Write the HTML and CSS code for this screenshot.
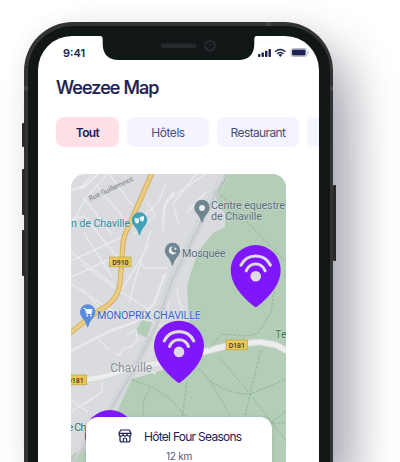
FILE: index.html
```html
<!DOCTYPE html>
<html lang="fr">
<head>
<meta charset="utf-8">
<title>Weezee Map</title>
<link rel="stylesheet" href="styles.css">
</head>
<body>
<div class="phone">
  <i class="key mute"></i><i class="key up"></i><i class="key down"></i><i class="key power"></i>
  <i class="band band-left"></i><i class="band band-right"></i><i class="band band-top"></i>
  <div class="bezel">
    <main class="screen">
      <svg class="notch" width="156" height="24" viewBox="0 0 156 24"><path fill="#111617" d="M0 0H155Q153.300 .5 153.300 3V8Q153 24 137 24H18Q2 24 1.700 8V3Q1.700 .5 0 0Z"/><rect x="59.700" y="7.500" width="36" height="4.500" rx="2.200" fill="#25292c"/><circle cx="109" cy="9.700" r="5" fill="#15191b" stroke="#2c3033" stroke-width="1.600"/><circle cx="109" cy="8.500" r="1" fill="#30353a"/></svg>
      <header class="status">
        <span class="time">9:41</span>
        <svg width="52" height="12" viewBox="0 0 52 12"><g fill="#1b2150"><rect x="0" y="7" width="2.400" height="3" rx=".7"/><rect x="3.500" y="5.500" width="2.400" height="4.500" rx=".7"/><rect x="7" y="3.700" width="2.400" height="6.300" rx=".7"/><rect x="10.500" y="2" width="2.400" height="8" rx=".7"/><path d="M20.300 7.800Q22.300 6.300 24.300 7.800L22.300 10Z"/></g><path d="M17.200 4.700Q22.300.3 27.400 4.700M19 6.800Q22.300 4 25.600 6.800" fill="none" stroke="#1b2150" stroke-width="1.400"/><rect x="32.900" y="1.500" width="16.200" height="8" rx="2.300" fill="none" stroke="#b9bbcd"/><rect x="34" y="2.600" width="13.600" height="5.800" rx="1.200" fill="#1b2150"/><path d="M50 4Q52 5.500 50 7Z" fill="#b9bbcd"/></svg>
      </header>
      <h1>Weezee Map</h1>
      <nav class="chips">
        <span class="chip active">Tout</span>
        <span class="chip hotels">Hôtels</span>
        <span class="chip food">Restaurant</span>
        <span class="chip more"></span>
      </nav>
      <section class="map">
        <svg class="canvas" viewBox="71 174 215 288" width="215" height="288">
          <defs>
            <g id="wifi-pin">
              <path fill="#8017fb" d="M-25 0A25 25 0 0 1 25 0C25 13 16 25 1.500 36.500Q0 37.500-1.500 36.500C-16 25-25 13-25 0Z"/>
              <g class="symbol"><circle cy="6.200" r="5.300"/><path d="M-14.700-4.800A16.300 16.300 0 0 1 14.700-4.800M-9.400.8A9.900 9.900 0 0 1 9.400.8"/></g>
            </g>
            <path id="poi" d="M-7.700 0A7.700 7.700 0 0 1 7.700 0C7.700 5.500 2.500 7 .7 14.500Q0 16-.7 14.500C-2.500 7-7.700 5.500-7.700 0Z"/>
          </defs>
          <rect x="71" y="174" width="215" height="301" fill="#d9dbde"/>
          <g fill="#b3cdb7">
            <path d="M229 174L213 193L225 214V227L213 233L198 252L190 275L187 286L189 322L195 358L286 352V174Z"/>
            <path d="M132 379L160 371L204 357L230 348L260 344L286 353V475H90L117 411Z"/>
            <path d="M135 332L142 320L153 319L147 338ZM71 455L87 448V475H71Z"/>
          </g>
          <g class="street">
            <path d="M71 226L86 198L107 174M71 190L82 186L93 174M71 220L84 216L123 264M83 197L112 235M96 185L126 221M109 174L132 205M71 261L124 236M71 277L121 254M84 233L112 277M71 252L114 285M71 284L119 315L151 321L162 326M83 265L120 292L163 318M97 337L109 350M107 316L80 287M133 235L155 216L147 201M151 230L136 277L129 303M166 184L158 203L139 220M196 174L173 204L179 225M171 198L205 174M187 212L206 192M139 262L145 268L168 268M120 292L131 275L150 243M126 336L136 330L138 340L132 346L124 348L120 355L115 354M102 377V392L81 405M71 400L88 412M72 411L94 398M139 372L148 370L156 374M177 288L179 302L187 319M163 222V231M168 302V310"/>
            <path class="wide" d="M71 351L110 331L135 322L154 304L165 274M71 190L84 187L98 174M163 222L165 205L174 192"/>
          </g>
          <g class="rail"><path class="bed" d="M226 174L205 214L173 278L155 328L132 373L107 415L71 464"/><path class="track" d="M221 174L202 211L171 274L151 329L128 374L102 416L71 457M230 174L208 214L180 270L159 323L136 372L110 416L71 470"/></g>
          <path class="major-edge" d="M71 382L103 377L127 369L160 363L203 352L230 345L260 342L276 345L287 351"/><path class="major" d="M71 382L103 377L127 369L160 363L203 352L230 345L260 342L276 345L287 351"/>
          <path class="gold-edge" d="M152 173L138 205L128 228Q123 237 123 244L120 283Q119 296 108 305L97 312L84 322L70 333"/>
          <path class="gold" d="M152 173L138 205L128 228Q123 237 123 244L120 283Q119 296 108 305L97 312L84 322L70 333"/>
          <path class="trail" d="M227 175L218 192L284 260M275 287L271 312L258 333Q250 337 237 335L221 334L208 350M219 356L234 375L250 394L240 440M261 350L250 394L286 379M196 365L210 381Q229 394 250 394L286 441M132 380L152 387L170 399L194 425M150 388L143 402V430M210 381L231 417M187 382L182 420M286 411L269 424M270 423H286"/>
          <g class="shield"><rect x="109.500" y="257" width="21.500" height="9.800"/><rect x="226" y="340" width="21.500" height="9.800"/><rect x="65.500" y="375" width="21.200" height="9.800"/></g>
          <g class="road-no"><text x="112.300" y="264.600" textLength="16.200">D910</text><text x="228.700" y="347.600" textLength="16.200">D181</text><text x="67.300" y="382.500" textLength="16.500">D181</text></g>
          <text class="road-name" transform="translate(90 201) rotate(-25)" textLength="48">Rue Guilleminot</text>
          <use href="#wifi-pin" x="110" y="435"/>
          <g class="label">
            <text x="71" y="227" fill="#2e8fa3" textLength="59">n de Chaville</text>
            <text x="211" y="209" fill="#566d79" textLength="74">Centre équestre</text>
            <text x="211" y="219.500" fill="#566d79" textLength="51">de Chaville</text>
            <text x="182" y="257.300" fill="#566d79" textLength="43.500">Mosquée</text>
            <text x="97" y="319" fill="#3069cc" textLength="104">MONOPRIX CHAVILLE</text>
            <text x="275" y="338" fill="#327a4b">Te</text>
            <text x="67.500" y="430.500" fill="#327a4b" textLength="19">e Ch</text>
            <text class="town" x="110.200" y="372.200" fill="#8b8e94" textLength="42">Chaville</text>
          </g>
          <use href="#poi" x="139.500" y="220" fill="#43a3b6"/><g fill="#e9f4f6"><path d="M134.500 218L139 218.500V222Q137 225 135 222ZM139.500 217L144 216V220Q142 223 140 220Z"/></g>
          <use href="#poi" x="202" y="207.500" fill="#708591"/><circle cx="202" cy="208" r="2.900" fill="#eceff1"/>
          <use href="#poi" x="172.500" y="250.500" fill="#708591"/><path d="M173 246.500A4 4 0 1 0 176.500 252A3.200 3.200 0 0 1 173 246.500ZM174.500 247L177 249L174.500 250Z" fill="#eceff1"/>
          <use href="#poi" x="87.700" y="312" fill="#5b8ce0"/><path d="M83.500 308.500H85.300L86.700 313.500H91.200L92 309.500H86" fill="#f1f5ff" stroke="#f1f5ff"/><circle cx="87.300" cy="315.500" r=".9" fill="#fff"/><circle cx="91" cy="315.500" r=".9" fill="#fff"/>
          <use href="#wifi-pin" x="255.700" y="270"/><use href="#wifi-pin" x="179" y="345.700"/>
        </svg>
        <article class="card">
          <div class="place"><svg width="14" height="14" viewBox="0 0 14 14" fill="none" stroke="#1b2150" stroke-width="1.200" stroke-linejoin="round"><path d="M2.700 1H11.300L13 4.300V5A2 2 0 0 1 9 5.200A2 2 0 0 1 5 5.200A2 2 0 0 1 1 5V4.300ZM1 4.300H13M2 7V11Q2 13 4 13H10Q12 13 12 11V7M5.300 13V10.500Q5.300 9 7 9T8.700 10.500V13"/></svg><span>Hôtel Four Seasons</span></div>
          <p>12 km</p>
        </article>
      </section>
    </main>
  </div>
</div>
</body>
</html>
```
FILE: styles.css
```css
* { box-sizing: border-box; }
html { height: 462px; overflow: hidden; }
body { margin: 0; width: 400px; height: 462px; padding-top: 22px; overflow: hidden; background: #fff; font-family: Inter, sans-serif; color: #1b2150; }
.phone { position: relative; width: 309px; height: 440px; margin: 0 0 0 24px; padding: 3.5px 3.5px 0; border-radius: 49px 49px 0 0; background: #333; box-shadow: 22px 22px 44px rgba(35, 38, 62, .3), 22px 60px 44px -8px rgba(35, 38, 62, .12), 0 0 26px rgba(0, 0, 0, .04); }
.bezel { height: 436.5px; padding: 10.5px 10.5px 0; border-radius: 45px 45px 0 0; background: #111617; }
.screen { position: relative; height: 426px; border-radius: 34px 34px 0 0; background: #fff; overflow: hidden; }
.key { position: absolute; left: -2px; width: 3px; background: #292929; border-radius: 1px 0 0 1px; }
.mute { top: 101px; height: 24px; }
.up { top: 147px; height: 46px; }
.down { top: 208px; height: 46px; }
.power { left: auto; right: -2.5px; top: 163px; height: 76px; }
.band { position: absolute; width: 3.5px; height: 5px; background: #454545; }
.band-left { left: 0; top: 64px; }
.band-right { right: 0; top: 64px; }
.band-top { top: 0; left: 242px; width: 5px; height: 3.5px; }
.notch { position: absolute; left: 63px; top: 0; }
.status { display: flex; justify-content: space-between; align-items: center; height: 34px; padding: 0 9.5px 0 25px; }
.time { font-size: 11px; font-weight: 600; letter-spacing: 0; }
h1 { margin: 7px 0 0 18px; font-size: 18px; line-height: 22px; font-weight: 500; letter-spacing: -.9px; -webkit-text-stroke: .2px #1b2150; }
.chips { display: flex; gap: 8px; margin: 18px 0 0 18px; }
.chip { flex: none; height: 30px; border-radius: 8px; background: #f4f4ff; color: #4d4d73; font-size: 12px; line-height: 31px; text-align: center; letter-spacing: -.62px; }
.active { width: 63px; background: #ffe0e6; color: #1b2150; font-weight: 600; }
.hotels { width: 82px; letter-spacing: -.45px; }
.food { width: 82px; }
.more { width: 70px; }
.map { position: relative; width: 215px; height: 288px; margin: 27px 0 0 33px; border-radius: 14px 14px 0 0; overflow: hidden; }
.canvas { display: block; font-family: Roboto, sans-serif; }
.symbol { fill: #dddde1; }
.symbol path { fill: none; stroke: #dddde1; stroke-width: 3.1; stroke-linecap: round; }
.street { fill: none; stroke: #e8eaec; stroke-width: 1.4; stroke-linejoin: round; }
.wide { stroke-width: 2.4; }
.rail { fill: none; }
.bed { stroke: #c9ccd0; stroke-width: 3; }
.track { stroke: #cdd0d3; stroke-width: 1; }
.major-edge, .major, .gold-edge, .gold, .trail { fill: none; stroke-linejoin: round; }
.major-edge { stroke: #d4d7da; stroke-width: 7; }
.major { stroke: #eceded; stroke-width: 5; }
.gold-edge { stroke: #d5ad55; stroke-width: 5.2; }
.gold { stroke: #ebcb85; stroke-width: 3.4; }
.trail { stroke: #86b394; stroke-width: .9; stroke-dasharray: 2.5 1.5; }
.shield { fill: #e8c955; stroke: #c1a43e; stroke-width: .7; }
.road-no { font-size: 7px; font-weight: 500; fill: #393528; }
.road-name { font-size: 7px; fill: #777b80; }
.label { font-size: 10.8px; paint-order: stroke; stroke: rgba(235, 238, 240, .55); stroke-width: 1; }
.town { font-size: 12px; }
.card { position: absolute; left: 15px; top: 243px; width: 186px; height: 45px; padding-top: 10.5px; border-radius: 12px 12px 0 0; background: #fff; box-shadow: 0 1px 5px rgba(50, 70, 80, .15); text-align: center; }
.place { display: flex; align-items: center; justify-content: center; gap: 12.5px; height: 17px; padding-left: 1px; font-size: 12px; }
.place span { letter-spacing: -.73px; }
.card p { margin: 4px 0 0; font-size: 10px; line-height: 14px; letter-spacing: -.2px; color: #55587a; }
```
